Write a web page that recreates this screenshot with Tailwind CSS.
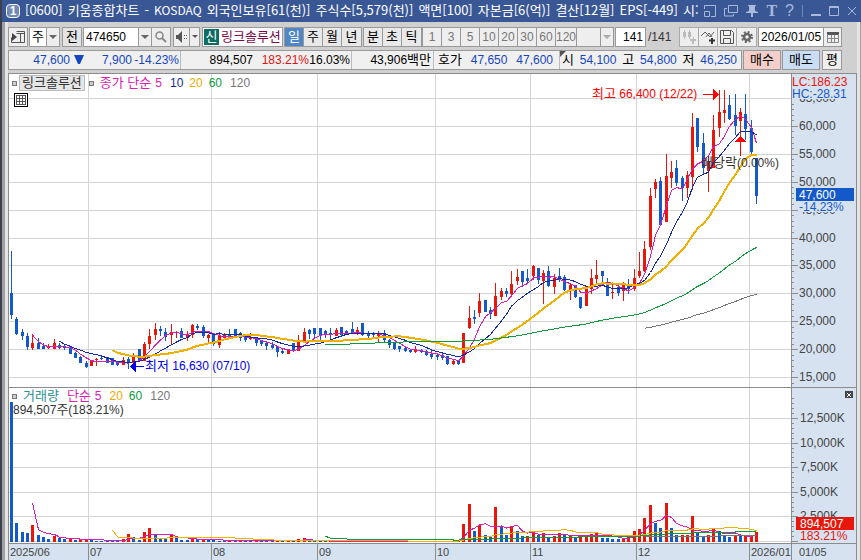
<!DOCTYPE html>
<html lang="ko">
<head>
    <meta charset="UTF-8">
    <meta name="viewport" content="width=device-width, initial-scale=1.0">
    <title>[0600] 키움종합차트</title>
    <script src="https://cdn.jsdelivr.net/npm/@tailwindcss/browser@4"></script>
</head>
<body class="min-h-screen bg-[#d0d0d0] font-['Liberation_Sans','Noto_Sans_CJK_KR',sans-serif] text-[13px] leading-[18px] text-black">
    <!-- Title bar -->
    <header class="flex items-center h-[22px] pl-1 pr-1 bg-[#3a5795] border-l-2 border-[#3d414d] text-white whitespace-nowrap">
        <span class="w-3.5 h-3.5 mr-[5px] rounded-sm border border-white bg-[#6f88b8] text-center text-[12px] leading-3 font-bold shrink-0">1</span>
        <h1 class="flex-1 min-w-0 h-[22px] leading-[20px] overflow-hidden flex gap-[5px] font-['Noto_Sans_CJK_KR',sans-serif]">
            <span>[0600]</span><span>키움종합차트</span><span>-</span><span class="text-[12px]">KOSDAQ</span><span>외국인보유[61(천)]</span><span>주식수[5,579(천)]</span><span>액면[100]</span><span>자본금[6(억)]</span><span>결산[12월]</span><span>EPS[-449]</span><span>시:</span>
        </h1>
        <div class="flex items-center gap-2 ml-1 shrink-0 text-[#a9b9dc]">
            <button type="button" aria-label="축소"><svg class="w-3 h-3" viewBox="0 0 12 12" fill="none" stroke="currentColor"><path d="M.5 4V.5h11v11H7M.5 6.5h5v5h-5z"/></svg></button>
            <button type="button" aria-label="복사"><svg class="w-3.5 h-3" viewBox="0 0 14 12" fill="none" stroke="currentColor"><path d="M4.500.5h9v7h-9zM3 3.500H.5v7.500h9V9"/></svg></button>
            <button type="button" aria-label="고정"><svg class="w-3 h-3" viewBox="0 0 12 12" fill="currentColor"><path d="M2 0h8v1H9v5l3 1v1H7v4H5V8H0V7l3-1V1H2z"/></svg></button>
            <button type="button" class="font-['Liberation_Serif',serif] text-base font-bold">T</button>
            <button type="button" class="text-base">?</button>
        </div>
        <div class="flex items-center gap-2 ml-2 pl-2 border-l border-[#6f88b8] shrink-0 text-[#a9b9dc]">
            <button type="button" aria-label="최소화"><svg class="w-2.5 h-3" viewBox="0 0 10 12" fill="currentColor"><path d="M0 9h10v2H0z"/></svg></button>
            <button type="button" aria-label="최대화"><svg class="w-2.5 h-3" viewBox="0 0 10 12" fill="none" stroke="currentColor"><path d="M.5 1.500h9v9h-9zM0 2.500h10"/></svg></button>
            <button type="button" aria-label="닫기"><svg class="w-2.5 h-3" viewBox="0 0 10 12" fill="none" stroke="currentColor"><path d="M1 2l8 8M9 2l-8 8"/></svg></button>
        </div>
    </header>

    <div class="flex border-l-2 border-[#3d414d]">
        <div class="w-[6px] shrink-0 bg-[#e4e4e4] border-l-3 border-[#a0a0a0]"></div>
        <main class="flex-1 min-w-0 pt-[5px]">
            <!-- Toolbar -->
            <div class="flex items-center h-5 pr-[15px] whitespace-nowrap">
                <button type="button" aria-label="목록" class="w-5 h-5 grid place-items-center border border-[#999] bg-[#eee]"><svg class="w-3.5 h-3" viewBox="0 0 14 12"><path d="M5.500.5h8v11h-13v-5M5.500 2.500h8M9.500 2.500v9" fill="none" stroke="#555"/><path d="M1 2l5 4-5 4z" fill="#444"/></svg></button>
                <button type="button" class="flex h-5 ml-px border border-[#999] bg-white"><span class="w-[16px]">주</span><span class="w-[13px] h-full grid place-items-center bg-[#eee] border-l border-[#999]"><svg class="w-2 h-1" viewBox="0 0 8 4"><path d="M0 0h8L4 4z" fill="#666"/></svg></span></button>
                <button type="button" class="w-5 h-5 ml-0.5 border border-[#999] bg-[#e4e4e4]">전</button>
                <div class="flex h-5 ml-px border border-[#999] bg-white">
                    <input type="text" aria-label="종목코드" value="474650" class="w-[54px] pl-0.5 text-[12px] bg-white">
                    <button type="button" aria-label="종목 목록" class="w-[13px] grid place-items-center bg-[#eee] border-l border-[#999]"><svg class="w-2 h-1" viewBox="0 0 8 4"><path d="M0 0h8L4 4z" fill="#666"/></svg></button>
                    <button type="button" aria-label="검색" class="w-[19px] grid place-items-center bg-[#eee] border-l border-[#999]"><svg class="w-3 h-3" viewBox="0 0 12 12" fill="none" stroke="#888" stroke-width="1.500"><circle cx="4.500" cy="4.500" r="3.500"/><path d="M7 7l4 4" stroke-width="2"/></svg></button>
                </div>
                <div class="flex h-5 ml-0.5 border border-[#999] bg-[#eee]">
                    <button type="button" aria-label="소리" class="w-[15px] grid place-items-center"><svg class="w-3 h-3" viewBox="0 0 12 12" fill="#555"><path d="M0 4h2l4-4v12L2 8H0zM8 4h1v1H8zM10 4h1v1h-1zM8 7h1v1H8zM10 7h1v1h-1z"/></svg></button>
                    <button type="button" aria-label="소리 설정" class="w-[10px] grid place-items-center border-l border-[#999]"><svg class="w-1.5 h-1" viewBox="0 0 6 4"><path d="M0 0h6L3 3z" fill="#555"/></svg></button>
                </div>
                <div class="flex items-center h-5 w-[81px] ml-0.5 border border-[#999] bg-white px-px">
                    <span class="w-[15px] h-4 leading-4 bg-[#0c6b62] text-white text-center">신</span><span class="ml-0.5 text-[#7c0a48]">링크솔루션</span>
                </div>
                <div class="flex h-5 ml-px border border-[#999] bg-[#e9e9e9] divide-x divide-[#999]">
                    <button type="button" class="w-[19px] bg-[#4f86c6] text-white">일</button>
                    <button type="button" class="w-[19px]">주</button>
                    <button type="button" class="w-[19px]">월</button>
                    <button type="button" class="w-[19px]">년</button>
                </div>
                <div class="flex h-5 ml-px border border-[#999] bg-[#e9e9e9] divide-x divide-[#999]">
                    <button type="button" class="w-[19px]">분</button>
                    <button type="button" class="w-[19px]">초</button>
                    <button type="button" class="w-[19px]">틱</button>
                </div>
                <div class="flex h-5 border border-[#999] bg-[#eee] divide-x divide-[#999] text-[12px] text-[#777]">
                    <button type="button" class="w-[19px]">1</button>
                    <button type="button" class="w-[19px]">3</button>
                    <button type="button" class="w-[19px]">5</button>
                    <button type="button" class="w-[19px]">10</button>
                    <button type="button" class="w-[19px]">20</button>
                    <button type="button" class="w-[19px]">30</button>
                    <button type="button" class="w-[19px]">60</button>
                    <button type="button" class="w-[21px]">120</button>
                    <button type="button" aria-label="분 선택" class="w-[36px] flex"><span class="flex-1"></span><span class="w-[13px] h-full grid place-items-center border-l border-[#999]"><svg class="w-2 h-1" viewBox="0 0 8 4"><path d="M0 0h8L4 4z" fill="#aaa"/></svg></span></button>
                </div>
                <input type="text" aria-label="조회 개수" value="141" class="w-[31px] h-5 ml-px pr-0.5 border border-[#999] bg-white text-[12px] text-right">
                <span class="ml-0.5 text-[12px] text-[#333]">/141</span>
                <div class="flex h-5 ml-auto border border-[#aaa] bg-[#eee] divide-x divide-[#aaa]">
                    <button type="button" aria-label="봉 추가" class="w-[19px] grid place-items-center"><svg class="w-3.5 h-3.5" viewBox="0 0 14 14" fill="#bbb"><path d="M1 2h3v5H1zM2 0h1v9H2zM6 2h3v5H6zM7 0h1v9H7zM11 7h1v2h2v2h-2v3h-2v-3H8V9h3z"/></svg></button>
                    <button type="button" aria-label="지표 추가" class="w-[19px] grid place-items-center"><svg class="w-3.5 h-3.5" viewBox="0 0 14 14" fill="none" stroke="#666"><path d="M0 6l4-4 5 5 4-5M5 7l3-4 3 4"/><path d="M8 10.500h6M11 8v6" stroke="#333" stroke-width="2"/></svg></button>
                    <button type="button" aria-label="저장" class="w-[19px] grid place-items-center"><svg class="w-3.5 h-3.5" viewBox="0 0 14 14" fill="none" stroke="#555"><path d="M.5.5h11l2 2v11H.5zM3.500.5v5h7v-5M3.500 13V8.500h7V13"/></svg></button>
                    <button type="button" aria-label="설정" class="w-[19px] grid place-items-center"><svg class="w-3 h-3" viewBox="0 0 12 12" fill="none" stroke="#666"><circle cx="6" cy="6" r="3" stroke-width="2.500"/><circle cx="6" cy="6" r="5" stroke-width="2" stroke-dasharray="2 1.930"/></svg></button>
                </div>
                <div class="flex h-5 ml-px border border-[#999] bg-white">
                    <input type="text" aria-label="기준일" value="2026/01/05" class="w-[64px] pl-0.5 text-[12px] bg-white">
                    <button type="button" aria-label="달력" class="w-[18px] grid place-items-center bg-[#eee] border-l border-[#999]"><svg class="w-3 h-3" viewBox="0 0 12 12"><path d="M0 1h12v3H0z" fill="#555"/><path d="M.5 3v8.500h11V3M4.500 4v7M7.500 4v7M1 7.500h10" fill="none" stroke="#888"/></svg></button>
                </div>
            </div>

            <!-- Quote row -->
            <div class="flex h-5 mt-[3px] pr-[15px] text-[12px] whitespace-nowrap">
                <div class="flex flex-1 border border-[#999] bg-[#f0f0f0] divide-x divide-[#bbb] text-[#1446be]">
                    <div class="flex w-[172px] justify-end items-center"><span>47,600</span><svg class="w-2.5 h-2.5 ml-1" viewBox="0 0 10 10"><path d="M0 0h10L6 9H4z" fill="#1446be"/></svg><span class="w-[48px] text-right">7,900</span><span class="w-[48px] text-right pr-px">-14.23%</span></div>
                    <div class="flex w-[171px] justify-end"><span class="text-black">894,507</span><span class="w-[56px] text-right text-[#e01414]">183.21%</span><span class="w-[42px] text-right pr-px text-black">16.03%</span></div>
                    <div class="w-[82px] pr-0.5 text-right text-black">43,906<span class="text-[13px]">백만</span></div>
                    <div class="flex w-[126px] pl-1 pr-1.5 justify-between"><span class="text-[13px] text-black">호가</span><span>47,650</span><span>47,600</span></div>
                    <div class="relative flex flex-1 pl-0.5 pr-1 justify-between">
                        <svg class="absolute left-0 top-0 w-1.5 h-1.5" viewBox="0 0 6 6"><path d="M0 0h6L0 6z" fill="#555"/></svg>
                        <span class="text-[13px] text-black">시</span><span>54,100</span><span class="text-[13px] text-black">고</span><span>54,800</span><span class="text-[13px] text-black">저</span><span>46,250</span>
                    </div>
                </div>
                <button type="button" class="w-[38px] ml-px border border-[#999] bg-[#f4cfc9] text-[13px]">매수</button>
                <button type="button" class="w-[38px] ml-px border border-[#999] bg-[#c9def5] text-[13px]">매도</button>
                <button type="button" class="w-5 ml-0.5 border border-[#999] bg-[#eee] text-[13px]">평</button>
            </div>

            <!-- Chart -->
            <section class="grid grid-cols-[minmax(0,1fr)_65px] mt-[3px] border-x border-t border-[#8c8c8c] bg-white text-[12px] text-[#444]">
                <div class="relative h-[313px]">
                    <svg id="price" class="block w-full h-full" shape-rendering="crispEdges"></svg>
                    <div class="absolute left-[3px] top-px flex items-center leading-[14px]">
                        <i class="w-[5px] h-[5px] border border-[#777] bg-[#ccc]"></i>
                        <button type="button" class="ml-0.5 px-0.5 border border-[#bbb] bg-[#e6e6e6] text-[13px] text-[#333]">링크솔루션</button>
                        <i class="w-[5px] h-[5px] ml-1 border border-[#777] bg-[#ccc]"></i>
                        <span class="ml-1.5 text-[13px] text-[#d81eb4]">종가 단순</span>
                        <span class="ml-1 text-[#d81eb4]">5</span>
                        <span class="ml-2 text-[#1428a0]">10</span>
                        <span class="ml-1.5 text-[#f0a800]">20</span>
                        <span class="ml-1.5 text-[#0f9a3c]">60</span>
                        <span class="ml-2 text-[#777]">120</span>
                    </div>
                    <button type="button" aria-label="표 보기" class="absolute left-[5px] top-[19px] w-3.5 h-3.5 border border-black bg-white"><svg class="w-3 h-3" viewBox="0 0 12 12" fill="none" stroke="#555" shape-rendering="crispEdges"><path d="M1.500 1.500h9v9h-9zM4.500 1v10M7.500 1v10M1 4.500h10M1 7.500h10"/></svg></button>
                </div>
                <svg id="price-axis" class="block w-full h-[313px] bg-[#d6e2f0] border-l border-[#8c8c8c]" shape-rendering="crispEdges"></svg>

                <div class="relative h-[156px] border-t border-[#8c8c8c]">
                    <svg id="volume" class="block w-full h-full" shape-rendering="crispEdges"></svg>
                    <div class="absolute left-[3px] top-px flex items-center leading-[14px]">
                        <i class="w-[5px] h-[5px] border border-[#777] bg-[#ccc]"></i>
                        <span class="ml-1.5 text-[13px] text-[#2a9292]">거래량</span>
                        <span class="ml-2 text-[13px] text-[#d81eb4]">단순</span>
                        <span class="ml-1 text-[#d81eb4]">5</span>
                        <span class="ml-2 text-[#f0a800]">20</span>
                        <span class="ml-1.5 text-[#0f9a3c]">60</span>
                        <span class="ml-2 text-[#777]">120</span>
                    </div>
                    <p class="absolute left-1 top-[13px] text-[#333]">894,507<span class="text-[13px]">주</span>(183.21%)</p>
                </div>
                <div class="relative h-[156px] border-t border-[#8c8c8c]">
                    <svg id="volume-axis" class="block w-full h-full bg-[#d6e2f0] border-l border-[#8c8c8c]" shape-rendering="crispEdges"></svg>
                    <button type="button" aria-label="지표 닫기" class="absolute right-[3px] top-[3px] w-2 h-[7px] bg-[#444] grid place-items-center"><svg class="w-1 h-1" viewBox="0 0 4 4" stroke="#fff"><path d="M0 0l4 4M4 0L0 4"/></svg></button>
                </div>

                <svg id="dates" class="block w-full h-[17px] bg-[#d6e2f0] border-t border-[#8c8c8c]" shape-rendering="crispEdges"></svg>
                <div class="h-[17px] pl-[7px] text-[11px] leading-4 bg-[#d6e2f0] border-t border-l border-[#8c8c8c]">01/05</div>
            </section>
        </main>
        <div class="w-[4px] shrink-0 bg-[#e4e4e4] border-r border-[#a0a0a0]"></div>
    </div>

    <script>
        // one candle: colour, high, body top, body bottom, low (pane y + 74)
        const candles = `b251,293,315,319 b317,319,334,335 b329,332,336,340 b333,336,347,350 r334,343,348,350 b338,343,349,349 b343,346,349,349
r344,346,348,349 r339,343,349,349 b343,345,348,349 b344,346,348,350 b346,346,354,354 b352,353,358,358 b356,357,363,363 b361,363,367,368
r361,361,366,366 r358,359,360,366 b355,358,359,360 b357,357,363,363 b358,358,365,365 b361,362,365,366 r357,360,365,365 b357,359,363,369
r353,355,363,363 b349,349,361,361 r342,344,361,361 r329,336,344,349 r323,329,335,340 b326,329,331,336 b328,332,337,341 r324,332,335,344
r331,332,333,338 b328,331,338,338 r331,334,338,341 r324,325,335,338 b324,326,328,330 b325,327,336,338 r334,335,338,343 b333,334,344,346
r332,335,345,348 r333,334,338,340 b329,335,336,339 b329,329,336,338 b332,333,338,341 b335,336,340,342 r333,337,339,340 b338,338,343,346
b340,341,344,346 b341,343,346,350 b342,345,348,349 b346,346,352,357 b349,351,353,354 r350,350,354,354 b343,343,351,352 r335,341,351,351
r328,332,342,342 b329,330,334,339 b328,328,334,339 b328,328,336,341 b330,331,334,338 b328,333,334,339 r328,330,336,336 b327,327,335,337
b330,331,333,335 b322,329,333,334 r327,330,332,335 b323,323,335,336 b331,333,336,338 b332,334,335,337 r331,333,336,343 b330,333,340,343
b339,340,345,348 b342,342,349,350 b346,346,349,352 b347,348,351,352 b349,350,352,353 r346,349,352,353 b349,350,352,353 b350,351,355,356
b350,354,357,359 b353,355,357,360 b353,355,358,360 b356,356,364,365 r360,361,364,365 b360,360,364,365 r333,333,363,363 r306,318,328,329
b310,317,319,324 r293,301,313,317 b300,300,312,312 b307,310,314,319 r283,296,316,316 r288,291,297,300 b288,291,294,297 r271,284,294,296
r269,277,281,285 b271,271,282,287 b269,278,281,283 r265,266,276,280 b268,268,280,284 r270,273,281,304 b266,271,286,287 r274,278,287,294
b268,276,280,282 b275,277,290,291 r284,285,290,300 b285,285,297,298 b297,297,308,309 r286,286,306,306 r269,278,289,294 r260,275,279,285
b271,271,276,283 b278,285,296,296 r284,292,293,299 b283,287,293,296 r282,285,291,301 b279,286,289,294 r269,278,289,291 r252,271,276,278
r241,249,271,272 r188,196,247,250 r179,182,189,198 b177,181,225,226 r154,176,222,222 r161,172,178,188 b160,168,183,186 b176,178,188,201
r171,175,188,198 r113,127,177,190 b118,118,147,152 b133,143,168,174 r155,161,171,192 r115,130,168,168 r90,112,128,137 r90,110,113,123
b95,105,119,120 b94,115,126,135 r108,112,121,137 b94,114,129,140 b120,128,152,155 b158,158,196,204`.split(/\s+/).map(s => ({
            color: s[0] === 'r' ? '#e8170c' : '#1459c9',
            v: s.slice(1).split(',').map(Number)
        }));

        // volume, 100K shares x 10
        const volumes = [1400, 190, 100, 90, 170, 70, 50, 30, 60, 35, 30, 32, 20, 28, 30, 25, 12, 11, 10, 10, 9, 30, 80, 50, 20, 100, 140, 70, 40, 38,
            80, 40, 22, 20, 32, 28, 30, 22, 20, 12, 11, 12, 10, 12, 11, 10, 12, 11, 10, 10, 12, 11, 12, 10, 25, 42, 12, 10, 9, 8,
            10, 9, 8, 10, 12, 9, 10, 8, 7, 10, 9, 8, 10, 7, 8, 9, 10, 9, 8, 7, 8, 10, 12, 9, 11, 180, 380, 110, 170, 70,
            60, 350, 150, 70, 150, 110, 58, 60, 90, 70, 90, 50, 60, 90, 70, 72, 50, 52, 60, 80, 100, 42, 40, 32, 30, 35, 60, 110, 130, 240,
            370, 190, 140, 390, 140, 68, 70, 72, 260, 90, 50, 70, 140, 110, 70, 50, 70, 55, 56, 60, 100];

        const months = [[14.5, '07'], [37.5, '08'], [57.5, '09'], [79.600, '10'], [97.5, '11'], [117.5, '12'], [138.600, '2026/01']];
        const $ = id => document.getElementById(id);
        const rect = (x, y, w, h, fill) => `<rect x="${x}" y="${y}" width="${w}" height="${h}" fill="${fill}"/>`;
        const text = (x, y, str, fill, size = 12) => `<text x="${x}" y="${y}" fill="${fill}" font-size="${size}">${str}</text>`;
        const ko = str => `<tspan font-size="13">${str}</tspan>`;

        // moving average as a polyline
        function average(list, n, x, y, color, width) {
            const pts = [];
            for (let i = n - 1; i < list.length; i++) {
                const sum = list.slice(i - n + 1, i + 1).reduce((a, b) => a + b, 0);
                pts.push(`${x(i) + 0.5},${y(sum / n)}`);
            }
            return `<polyline points="${pts.join(' ')}" fill="none" stroke="${color}" stroke-width="${width}"/>`;
        }

        function draw() {
            const W = $('price').clientWidth;
            const x = i => Math.round(2 + i * (W - 37) / 140);
            const grid = h => months.map(m => rect(x(m[0]), 0, 1, h, '#d4d4d4')).join('');

            // price pane
            let s = grid(313);
            let a = '';
            for (let p = 15; p <= 65; p += 5) {
                const y = Math.round(303 - (p - 15) * 5.58);
                s += rect(0, y, W, 1, '#d4d4d4');
                a += rect(0, y, 6, 1, '#8c8c8c') + text(7, y + 4, p + ',000', '#444');
            }
            for (let k = -1; k < 52; k++) a += rect(0, Math.round(303 - k * 5.58), 2, 1, '#8c8c8c');
            candles.forEach((c, i) => {
                const [hi, top, bot, lo] = c.v.map(n => n - 74);
                s += rect(x(i), hi, 1, lo - hi, c.color) + rect(x(i) - 1, top, 3, Math.max(bot - top, 1), c.color);
            });
            const closes = candles.map(c => (c.color === '#e8170c' ? c.v[1] : c.v[2]) - 74);
            const same = v => v;
            s += average(closes, 5, x, same, '#d81eb4', 1) + average(closes, 10, x, same, '#1428a0', 1)
                + average(closes, 20, x, same, '#f0b000', 2) + average(closes, 60, x, same, '#0f9a3c', 1)
                + average(closes, 120, x, same, '#777', 1);
            s += text(x(133) - 127, 24, ko('최고') + ' 66,400 (12/22)', '#f00')
                + `<path d="M${x(133) - 16} 20h10v-5l6 5.500-6 5.500v-5h-10z" fill="#f00"/>`;
            s += text(x(22) + 17, 296, ko('최저') + ' 16,630 (07/10)', '#00e')
                + `<path d="M${x(22) + 16} 292h-8v-5l-6 5.500 6 5.500v-5h8z" fill="#00e"/>`;
            s += text(x(130) - 2, 93, ko('배당락') + '(0.00%)', '#333')
                + `<path d="M${x(137)} 82v-14h-5l5.500-6 5.500 6h-5v14z" fill="#f00"/>`;
            $('price').innerHTML = s;

            a += rect(0, 0, 64, 25, '#d6e2f0') + text(0, 12, 'LC:186.23', '#e8170c') + text(0, 24, 'HC:-28.31', '#1459c9');
            a += rect(7, 127, 50, 11, '#d6e2f0') + rect(4, 114, 58, 13, '#1459c9') + text(7, 125, '47,600', '#fff') + text(7, 137, '-14.23%', '#1459c9');
            $('price-axis').innerHTML = a;

            // volume pane
            s = grid(156);
            a = '';
            for (let k = 0; k <= 5; k++) {
                const y = Math.round(153 - k * 24.6);
                s += rect(0, y, W, 1, '#d4d4d4');
                a += rect(0, y, 6, 1, '#8c8c8c');
                if (k) a += text(8, y + 4, (k * 2500).toLocaleString('en-US') + 'K', '#444');
            }
            for (let k = 0; k < 30; k++) a += rect(0, Math.round(153 - k * 4.92), 2, 1, '#8c8c8c');
            volumes.forEach((v, i) => {
                const h = Math.round(v / 10);
                s += rect(x(i) - 1, 154 - h, 3, h, i && v > volumes[i - 1] ? '#e8170c' : '#1459c9');
            });
            const vy = v => 154 - v / 10;
            s += average(volumes, 5, x, vy, '#d81eb4', 1) + average(volumes, 20, x, vy, '#f0b000', 1)
                + average(volumes, 60, x, vy, '#0f9a3c', 1) + average(volumes, 120, x, vy, '#777', 1);
            $('volume').innerHTML = s;
            a += rect(4, 129, 58, 13, '#e8170c') + text(8, 140, '894,507', '#fff') + text(8, 152, '183.21%', '#e8170c');
            $('volume-axis').innerHTML = a;

            // date axis
            $('dates').innerHTML = text(1, 12, '2025/06', '#444', 11)
                + months.map(m => rect(x(m[0]), 0, 1, 17, '#8c8c8c') + text(x(m[0]) + 2, 12, m[1], '#444', 11)).join('');
        }
        new ResizeObserver(draw).observe($('price'));
    </script>
</body>
</html>
